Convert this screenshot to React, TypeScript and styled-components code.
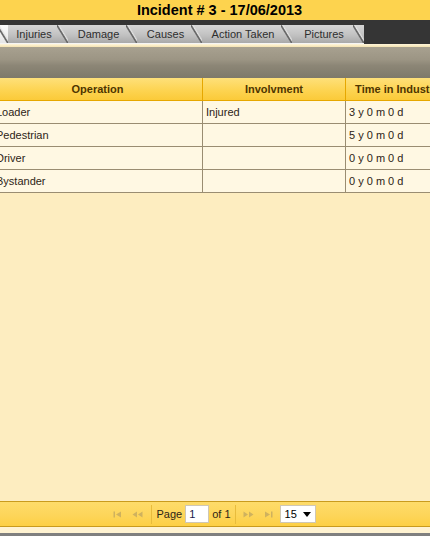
import React from "react";
import styled, { createGlobalStyle } from "styled-components";

const GlobalStyle = createGlobalStyle`
  html, body { margin: 0; padding: 0; }
  body { background: #808080; font-family: "Liberation Sans", Arial, sans-serif; }
`;

const Page = styled.div`
  width: 430px;
  height: 536px;
  display: flex;
  flex-direction: column;
  overflow: hidden;
  background: #fdedc0;
`;

const TitleBar = styled.div`
  height: 20px;
  flex: none;
  background: #fdd34e;
  border-bottom: 2px solid #353535;
  display: flex;
  align-items: center;
  justify-content: center;
  padding-left: 9px;
  font-family: "Liberation Sans", Arial, sans-serif;
  font-weight: bold;
  font-size: 14.5px;
  color: #000;
`;

const TabStrip = styled.div`
  height: 22px;
  flex: none;
  background: #353535;
  display: flex;
  align-items: flex-end;
  margin-left: -6px;
`;

const Tab = styled.div<{ $selected?: boolean; $w: number }>`
  position: relative;
  flex: none;
  box-sizing: border-box;
  width: ${(p) => p.$w}px;
  height: 19px;
  padding: ${(p) => (p.$selected ? "0" : "0 16px 1px 8px")};
  display: flex;
  align-items: center;
  justify-content: center;
  white-space: nowrap;
  font-family: "Liberation Sans", Arial, sans-serif;
  font-size: 11px;
  color: #2e2e2e;
  background: ${(p) =>
    p.$selected
      ? "linear-gradient(#fbfbfb, #e6e6e6)"
      : "linear-gradient(#d6d6d6, #c2c2c2 55%, #a9a9a9)"};
  border-bottom: 1px solid #f4f4f4;
  &::after {
    content: "";
    position: absolute;
    right: 0;
    top: 0;
    width: 11px;
    height: 18px;
    background: linear-gradient(
      to top right,
      transparent 42%,
      #5e5e5e 48%,
      #7a7a7a 52%,
      #e2e2e2 56%,
      transparent 64%
    );
  }
`;

const CreamLine = styled.div`
  height: 3px;
  flex: none;
  background: linear-gradient(#fff6dc, #f4e2b0);
`;

const Band = styled.div`
  height: 31px;
  flex: none;
  background: linear-gradient(#a8a190 0%, #9c9584 40%, #8c8676 60%, #7e796a 100%);
`;

const Table = styled.div`
  margin-left: -7px;
  display: grid;
  grid-template-columns: 210px 143px 103px;
`;

const HeadCell = styled.div<{ $last?: boolean }>`
  height: 23px;
  box-sizing: border-box;
  display: flex;
  align-items: center;
  justify-content: center;
  background: linear-gradient(#fee07a, #fdd452 55%, #fbca39);
  border-bottom: 1px solid #e6a700;
  border-right: ${(p) => (p.$last ? "none" : "1px solid #e6a700")};
  font-family: "Liberation Sans", Arial, sans-serif;
  font-size: 11px;
  font-weight: bold;
  color: #4e3500;
  white-space: nowrap;
`;

const Cell = styled.div<{ $last?: boolean }>`
  height: 23px;
  box-sizing: border-box;
  display: flex;
  align-items: center;
  padding-left: 3px;
  background: #fff8e3;
  border-bottom: 1px solid #9a8d72;
  border-right: ${(p) => (p.$last ? "none" : "1px solid #9a8d72")};
  font-family: "Liberation Sans", Arial, sans-serif;
  font-size: 11px;
  color: #2d2416;
  white-space: nowrap;
`;

const Body = styled.div`
  flex: 1;
  background: #fdedc0;
`;

const Pager = styled.div`
  height: 24px;
  flex: none;
  border-top: 1px solid #c99b1d;
  border-bottom: 1px solid #c99b1d;
  background: linear-gradient(#fedc6a, #fdd55a 55%, #fdd044);
  display: flex;
  align-items: center;
  justify-content: center;
  padding-right: 7px;
  font-family: "Liberation Sans", Arial, sans-serif;
  font-size: 11px;
  color: #2d2416;
`;

const PagerIcon = styled.span`
  width: 20px;
  height: 18px;
  display: flex;
  justify-content: center;
  align-items: center;
`;

const Sep = styled.span<{ $right: number }>`
  width: 1px;
  height: 19px;
  background: #e8bc3c;
  margin: 0 ${(p) => p.$right}px 0 4px;
`;

const PageInput = styled.div`
  width: 24px;
  height: 18px;
  box-sizing: border-box;
  background: #fff;
  border: 1px solid #cfc7b4;
  margin: 0 3px;
  display: flex;
  align-items: center;
  padding-left: 3px;
  color: #1a1a4a;
`;

const SizeSelect = styled.div`
  width: 36px;
  height: 18px;
  box-sizing: border-box;
  background: #fff;
  border: 1px solid #cfc7b4;
  margin-left: 1px;
  display: flex;
  align-items: center;
  justify-content: space-between;
  padding: 0 4px 0 4px;
  color: #000;
`;

const Footer = styled.div`
  height: 6px;
  flex: none;
  background: #fff3d2;
  border-bottom: 3px solid #808080;
`;

const ic = "#cfb25e";

const First = () => (
  <svg width="9" height="7" viewBox="0 0 9 7">
    <rect x="0.5" y="0.5" width="1.5" height="6" fill={ic} />
    <path d="M8 0.5 L3 3.5 L8 6.5 Z" fill={ic} />
  </svg>
);
const Prev = () => (
  <svg width="11" height="7" viewBox="0 0 11 7">
    <path d="M5 0.5 L0.5 3.5 L5 6.5 Z M10.5 0.5 L6 3.5 L10.5 6.5 Z" fill={ic} />
  </svg>
);
const Next = () => (
  <svg width="11" height="7" viewBox="0 0 11 7">
    <path d="M0.5 0.5 L5 3.5 L0.5 6.5 Z M6 0.5 L10.5 3.5 L6 6.5 Z" fill={ic} />
  </svg>
);
const Last = () => (
  <svg width="9" height="7" viewBox="0 0 9 7">
    <path d="M1 0.5 L6 3.5 L1 6.5 Z" fill={ic} />
    <rect x="7" y="0.5" width="1.5" height="6" fill={ic} />
  </svg>
);
const Down = () => (
  <svg width="8" height="5" viewBox="0 0 8 5">
    <path d="M0 0 L8 0 L4 5 Z" fill="#000" />
  </svg>
);

const rows = [
  ["Loader", "Injured", "3 y 0 m 0 d"],
  ["Pedestrian", "", "5 y 0 m 0 d"],
  ["Driver", "", "0 y 0 m 0 d"],
  ["Bystander", "", "0 y 0 m 0 d"],
];

const tabs: [string, number][] = [
  ["Injuries", 60],
  ["Damage", 69],
  ["Causes", 65],
  ["Action Taken", 90],
  ["Pictures", 72],
];

export default function App() {
  return (
    <>
      <GlobalStyle />
      <Page>
        <TitleBar>Incident # 3 - 17/06/2013</TitleBar>
        <TabStrip>
          <Tab $selected $w={14} />
          {tabs.map(([t, w]) => (
            <Tab key={t} $w={w}>
              {t}
            </Tab>
          ))}
        </TabStrip>
        <CreamLine />
        <Band />
        <Table>
          <HeadCell>Operation</HeadCell>
          <HeadCell>Involvment</HeadCell>
          <HeadCell $last>Time in Industry</HeadCell>
          {rows.map((r, i) => (
            <React.Fragment key={i}>
              <Cell>{r[0]}</Cell>
              <Cell>{r[1]}</Cell>
              <Cell $last>{r[2]}</Cell>
            </React.Fragment>
          ))}
        </Table>
        <Body />
        <Pager>
          <PagerIcon>
            <First />
          </PagerIcon>
          <PagerIcon>
            <Prev />
          </PagerIcon>
          <Sep $right={4} />
          <span>Page</span>
          <PageInput>1</PageInput>
          <span>of 1</span>
          <Sep $right={3} />
          <PagerIcon>
            <Next />
          </PagerIcon>
          <PagerIcon>
            <Last />
          </PagerIcon>
          <SizeSelect>
            <span>15</span>
            <Down />
          </SizeSelect>
        </Pager>
        <Footer />
      </Page>
    </>
  );
}
